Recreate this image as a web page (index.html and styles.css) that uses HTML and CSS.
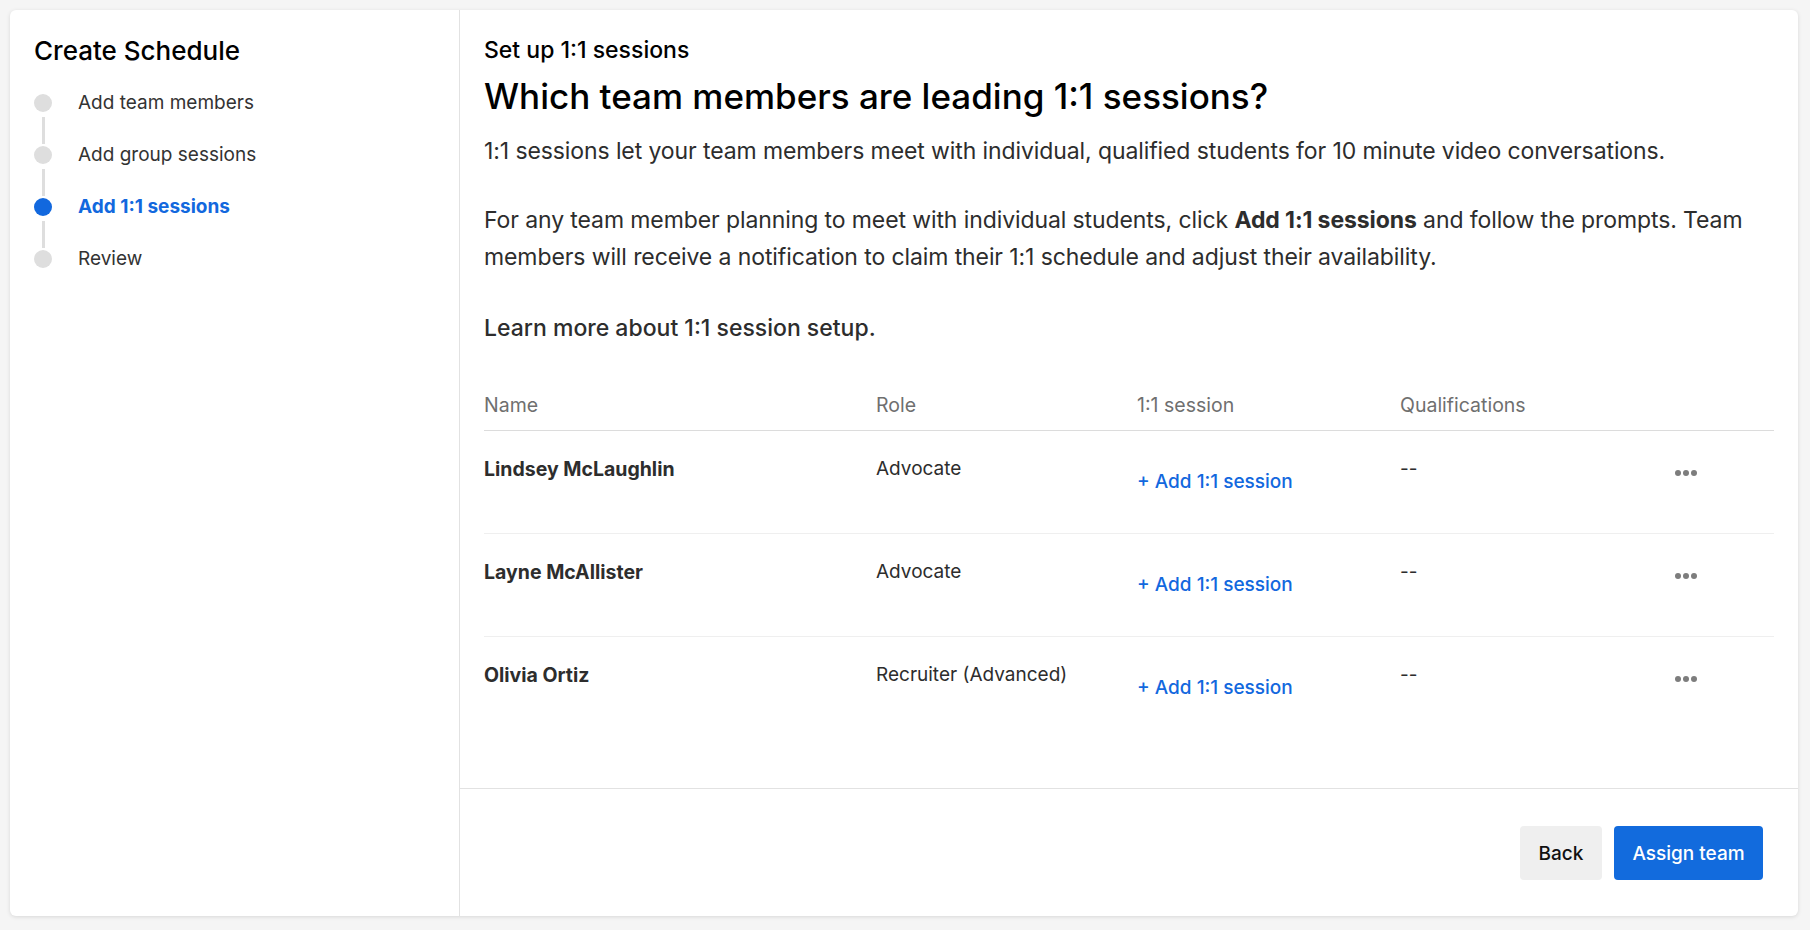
FILE: index.html
```html
<!DOCTYPE html>
<html lang="en">
<head>
<meta charset="utf-8">
<title>Create Schedule</title>
<link rel="stylesheet" href="styles.css">
</head>
<body>
<div class="card">
  <aside class="sidebar">
    <h2 class="sidebar-title">Create Schedule</h2>
    <ol class="steps">
      <li class="step">
        <div class="marker"><span class="dot"></span><span class="line"></span></div>
        <span class="step-label">Add team members</span>
      </li>
      <li class="step">
        <div class="marker"><span class="dot"></span><span class="line"></span></div>
        <span class="step-label">Add group sessions</span>
      </li>
      <li class="step step-active">
        <div class="marker"><span class="dot"></span><span class="line"></span></div>
        <span class="step-label">Add 1:1 sessions</span>
      </li>
      <li class="step step-last">
        <div class="marker"><span class="dot"></span></div>
        <span class="step-label">Review</span>
      </li>
    </ol>
  </aside>
  <main class="main">
    <section class="content">
      <div class="eyebrow">Set up 1:1 sessions</div>
      <h1 class="heading">Which team members are leading 1:1 sessions?</h1>
      <p class="para">1:1 sessions let your team members meet with individual, qualified students for 10 minute video conversations.</p>
      <p class="para para-2">For any team member planning to meet with individual students, click <strong>Add 1:1 sessions</strong> and follow the prompts. Team members will receive a notification to claim their 1:1 schedule and adjust their availability.</p>
      <p class="learn">Learn more about 1:1 session setup.</p>

      <div class="table">
        <div class="trow thead">
          <div class="cell">Name</div>
          <div class="cell">Role</div>
          <div class="cell">1:1 session</div>
          <div class="cell">Qualifications</div>
          <div class="cell"></div>
        </div>
        <div class="trow">
          <div class="cell name">Lindsey McLaughlin</div>
          <div class="cell">Advocate</div>
          <div class="cell"><a class="add-link" href="#">+ Add 1:1 session</a></div>
          <div class="cell">--</div>
          <div class="cell actions"><span class="more"><i></i><i></i><i></i></span></div>
        </div>
        <div class="trow">
          <div class="cell name">Layne McAllister</div>
          <div class="cell">Advocate</div>
          <div class="cell"><a class="add-link" href="#">+ Add 1:1 session</a></div>
          <div class="cell">--</div>
          <div class="cell actions"><span class="more"><i></i><i></i><i></i></span></div>
        </div>
        <div class="trow trow-last">
          <div class="cell name">Olivia Ortiz</div>
          <div class="cell">Recruiter (Advanced)</div>
          <div class="cell"><a class="add-link" href="#">+ Add 1:1 session</a></div>
          <div class="cell">--</div>
          <div class="cell actions"><span class="more"><i></i><i></i><i></i></span></div>
        </div>
      </div>
    </section>
    <footer class="footer">
      <button class="btn btn-secondary" type="button">Back</button>
      <button class="btn btn-primary" type="button">Assign team</button>
    </footer>
  </main>
</div>
</body>
</html>
```

FILE: styles.css
```css
* { box-sizing: border-box; }

html, body {
  margin: 0;
  padding: 0;
  height: 100%;
}

body {
  background: #f5f5f5;
  font-family: Inter, "Liberation Sans", sans-serif;
  color: #2d2d2d;
  padding: 10px 12px 14px 10px;
}

.card {
  display: flex;
  height: 906px;
  background: #fff;
  border-radius: 6px;
  box-shadow: 0 1px 4px rgba(0, 0, 0, 0.12);
  overflow: hidden;
}

/* Sidebar */
.sidebar {
  width: 450px;
  flex: none;
  border-right: 1px solid #e2e2e2;
  padding: 27px 24px;
}

.sidebar-title {
  margin: 0 0 29px;
  font-size: 26px;
  line-height: 28px;
  font-weight: 500;
  color: #000;
}

.steps {
  list-style: none;
  margin: 0;
  padding: 0;
}

.step {
  display: flex;
  align-items: flex-start;
  gap: 26px;
}

.marker {
  width: 18px;
  display: flex;
  flex-direction: column;
  align-items: center;
}

.dot {
  width: 18px;
  height: 18px;
  border-radius: 50%;
  background: #dedede;
}

.line {
  width: 3px;
  height: 27px;
  margin: 5px 0 2px;
  background: #dedede;
}

.step-label {
  font-size: 19px;
  line-height: 18px;
  color: #333;
}

.step-active .dot { background: #1268de; }
.step-active .step-label { color: #1268de; font-weight: 700; }

/* Main */
.main {
  flex: 1;
  display: flex;
  flex-direction: column;
  min-width: 0;
}

.content {
  flex: 1;
  padding: 26px 24px 0;
}

.eyebrow {
  font-size: 23px;
  line-height: 28px;
  font-weight: 500;
  color: #000;
}

.heading {
  margin: 10px 0 0;
  font-size: 35px;
  line-height: 44px;
  font-weight: 500;
  color: #000;
}

.para {
  margin: 15px 0 0;
  font-size: 23px;
  line-height: 37px;
  color: #2d2d2d;
  letter-spacing: -0.1px;
}

.para-2 { margin-top: 32px; }

.para strong { font-weight: 700; }

.learn {
  margin: 38px 0 0;
  font-size: 23px;
  line-height: 28px;
  font-weight: 500;
  color: #2d2d2d;
}

/* Table */
.table {
  margin-top: 52px;
}

.trow {
  display: grid;
  grid-template-columns: 392px 261px 263px 275px 1fr;
  border-bottom: 1px solid #efefef;
  height: 103px;
  padding-top: 27px;
}

.thead {
  height: 37px;
  padding-top: 0;
  border-bottom: 1px solid #dcdcdc;
  color: #6f6f6f;
}

.thead .cell { font-size: 19.5px; }

.trow-last { border-bottom: none; }

.cell {
  font-size: 19px;
  line-height: 22px;
}

.name {
  font-size: 19.5px;
  font-weight: 700;
  color: #2d2d2d;
}

.add-link {
  display: inline-block;
  margin-top: 13px;
  color: #1268de;
  font-weight: 500;
  text-decoration: none;
}

.actions {
  padding-top: 12px;
}

.more {
  display: flex;
  gap: 2px;
}

.more i {
  width: 6px;
  height: 6px;
  border-radius: 50%;
  background: #7d7d7d;
}

/* Footer */
.footer {
  display: flex;
  justify-content: flex-end;
  gap: 12px;
  border-top: 1px solid #e2e2e2;
  padding: 37px 35px 36px;
}

.btn {
  height: 54px;
  border: none;
  border-radius: 4px;
  font-family: Inter, "Liberation Sans", sans-serif;
  font-size: 19px;
  font-weight: 500;
  padding: 0 18px;
  cursor: pointer;
}

.btn-secondary {
  background: #efefef;
  color: #111;
  width: 82px;
}

.btn-primary {
  background: #126bdd;
  color: #fff;
  width: 149px;
}
```
